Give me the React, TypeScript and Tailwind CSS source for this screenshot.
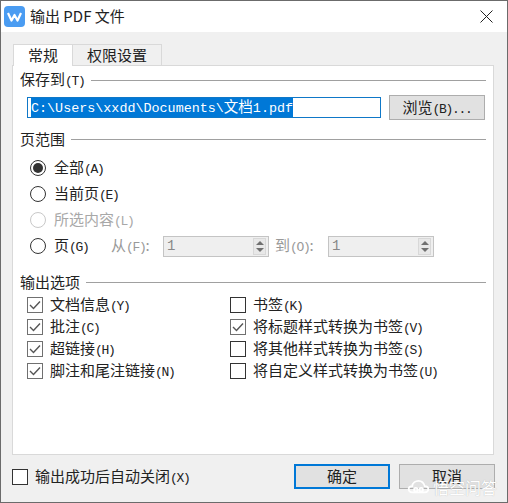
const CJK = "font-['Noto_Sans_CJK_SC','Liberation_Sans',sans-serif]";

function Hotkey({ children }: { children: string }) {
  return <span className="font-['Liberation_Mono',monospace] text-[13px] tracking-[-1.3px]">{children}</span>;
}

function Section({ title, hotkey }: { title: string; hotkey?: string }) {
  return (
    <div className="flex items-center gap-[6px] h-[20px]">
      <span className="text-[15px] leading-[20px] text-[#222] whitespace-nowrap">
        {title}
        {hotkey && <Hotkey>{hotkey}</Hotkey>}
      </span>
      <div className="flex-1 h-px bg-[#a0a0a0]" />
    </div>
  );
}

function Radio({ label, hotkey, checked, disabled }: { label: string; hotkey: string; checked?: boolean; disabled?: boolean }) {
  return (
    <div className="flex items-center gap-[8px] h-[26px]">
      <span className={`w-[16px] h-[16px] rounded-full border flex items-center justify-center bg-white ${disabled ? 'border-[#c8c8c8]' : 'border-[#333]'}`}>
        {checked && <span className="w-[10px] h-[10px] rounded-full bg-[#333]" />}
      </span>
      <span className={`text-[15px] whitespace-nowrap ${disabled ? 'text-[#a8a8a8]' : 'text-[#222]'}`}>
        {label}
        <Hotkey>{hotkey}</Hotkey>
      </span>
    </div>
  );
}

function Check({ label, hotkey, checked }: { label: string; hotkey: string; checked?: boolean }) {
  return (
    <div className="flex items-center gap-[7px] h-[22px]">
      <span className={`w-[16px] h-[16px] border bg-white flex items-center justify-center ${checked ? 'border-[#707070]' : 'border-[#333]'}`}>
        {checked && (
          <svg width="12" height="10" viewBox="0 0 12 10" fill="none" stroke="#555" strokeWidth="1.4">
            <path d="M1 5l3.5 3.5L11 1.5" />
          </svg>
        )}
      </span>
      <span className="text-[15px] text-[#222] whitespace-nowrap">
        {label}
        <Hotkey>{hotkey}</Hotkey>
      </span>
    </div>
  );
}

function Spinner() {
  return (
    <div className="w-[106px] h-[21px] border border-[#c4c4c4] bg-[#efefef] flex items-center justify-between pl-[3px] pr-[2px]">
      <span className="font-['Liberation_Mono',monospace] text-[14px] text-[#888]">1</span>
      <span className="w-[13px] h-[17px] border border-[#d8d8d8] bg-[#e8e8e8] flex flex-col items-center justify-center gap-[3px]">
        <span className="w-0 h-0 border-x-[4px] border-x-transparent border-b-[4px] border-b-[#707070]" />
        <span className="w-0 h-0 border-x-[4px] border-x-transparent border-t-[4px] border-t-[#707070]" />
      </span>
    </div>
  );
}

export default function App() {
  return (
    <div className={`${CJK} relative w-[508px] h-[503px] border border-[#6b6b6b] bg-[#f0f0f0] flex flex-col overflow-hidden`}>
      {/* Title bar */}
      <div className="h-[31px] bg-white flex items-center pl-[3px] pr-[14px] shrink-0">
        <svg width="21" height="21" viewBox="0 0 21 21">
          <rect width="21" height="21" rx="4" fill="#4a9cf2" />
          <path d="M4 7l3.5 7.5L10.5 9l3 5.5L17 7" fill="none" stroke="#fff" strokeWidth="2.2" strokeLinejoin="round" />
        </svg>
        <span className="ml-[5px] text-[15px] text-[#222] whitespace-pre">输出 PDF 文件</span>
        <svg className="ml-auto" width="13" height="13" viewBox="0 0 13 13" stroke="#222" strokeWidth="1">
          <path d="M0.5 0.5l12 12M12.5 0.5l-12 12" />
        </svg>
      </div>

      {/* Tabs */}
      <div className="flex pl-[12px] pt-[12px] h-[33px] shrink-0">
        <div className="w-[60px] h-[22px] bg-white border border-b-0 border-[#d9d9d9] text-[15px] leading-[20px] text-[#222] text-center z-10">常规</div>
        <div className="w-[89px] h-[21px] border border-l-0 border-b-0 border-[#d9d9d9] text-[15px] leading-[20px] text-[#222] text-center">权限设置</div>
      </div>

      {/* Panel */}
      <div className="ml-[11px] w-[482px] h-[390px] bg-white border border-[#d9d9d9] px-[7px] pt-[4px] shrink-0">
        <Section title="保存到" hotkey="(T)" />
        <div className="flex items-center justify-between pl-[7px] pr-px mt-[5px] h-[25px]">
          <div className="w-[354px] h-[21px] border border-[#0f78c8] flex items-center pl-[3px]">
            <span className="bg-[#0078d7] text-white h-[19px] leading-[20px] text-[13.4px] font-['Liberation_Mono','Noto_Sans_CJK_SC',monospace] whitespace-nowrap">
              C:\Users\xxdd\Documents\<span className="text-[14.5px]">文档</span>1.pdf
            </span>
          </div>
          <div className="w-[96px] h-[25px] bg-[#e1e1e1] border border-[#adadad] text-[15px] leading-[22px] text-[#222] text-center">
            浏览<Hotkey>(B)...</Hotkey>
          </div>
        </div>

        <div className="mt-[9px]">
          <Section title="页范围" />
        </div>
        <div className="pl-[10px] mt-[6px]">
          <Radio label="全部" hotkey="(A)" checked />
          <Radio label="当前页" hotkey="(E)" />
          <Radio label="所选内容" hotkey="(L)" disabled />
          <div className="flex items-center">
            <div className="w-[81px]">
              <Radio label="页" hotkey="(G)" />
            </div>
            <span className="w-[52px] text-[15px] text-[#999] whitespace-nowrap">从<Hotkey>(F)</Hotkey>:</span>
            <Spinner />
            <span className="ml-[6px] w-[53px] text-[15px] text-[#999] whitespace-nowrap">到<Hotkey>(O)</Hotkey>:</span>
            <Spinner />
          </div>
        </div>

        <div className="mt-[13px]">
          <Section title="输出选项" />
        </div>
        <div className="grid grid-cols-[203px_1fr] pl-[7px] mt-[2px]">
          <Check label="文档信息" hotkey="(Y)" checked />
          <Check label="书签" hotkey="(K)" />
          <Check label="批注" hotkey="(C)" checked />
          <Check label="将标题样式转换为书签" hotkey="(V)" checked />
          <Check label="超链接" hotkey="(H)" checked />
          <Check label="将其他样式转换为书签" hotkey="(S)" />
          <Check label="脚注和尾注链接" hotkey="(N)" checked />
          <Check label="将自定义样式转换为书签" hotkey="(U)" />
        </div>
      </div>

      {/* Footer */}
      <div className="flex items-center pl-[11px] pr-[12px] mt-[9px] h-[25px]">
        <Check label="输出成功后自动关闭" hotkey="(X)" />
        <div className="ml-auto w-[96px] h-[25px] bg-[#e1e1e1] border-2 border-[#0078d7] text-[15px] leading-[20px] text-[#222] text-center">确定</div>
        <div className="ml-[9px] w-[96px] h-[25px] bg-[#e1e1e1] border border-[#adadad] text-[15px] leading-[22px] text-[#222] text-center">取消</div>
      </div>

      {/* Watermark */}
      <div className="absolute right-[10px] bottom-[6px] flex items-center gap-[3px] text-[16px] leading-[18px] text-white [text-shadow:0_0_1px_#aaa]">
        <svg width="23" height="16" viewBox="0 0 24 18" fill="none" stroke="currentColor" strokeWidth="2">
          <path d="M5 15c-3 0-4-2-4-4s2-3 4-3c0-4 4-6 7-6s6 2 7 6c2 0 4 1 4 3s-1 4-4 4z" />
          <circle cx="9" cy="12" r="2" />
          <circle cx="15" cy="12" r="2" />
        </svg>
        <span>悟空问答</span>
      </div>
    </div>
  );
}
